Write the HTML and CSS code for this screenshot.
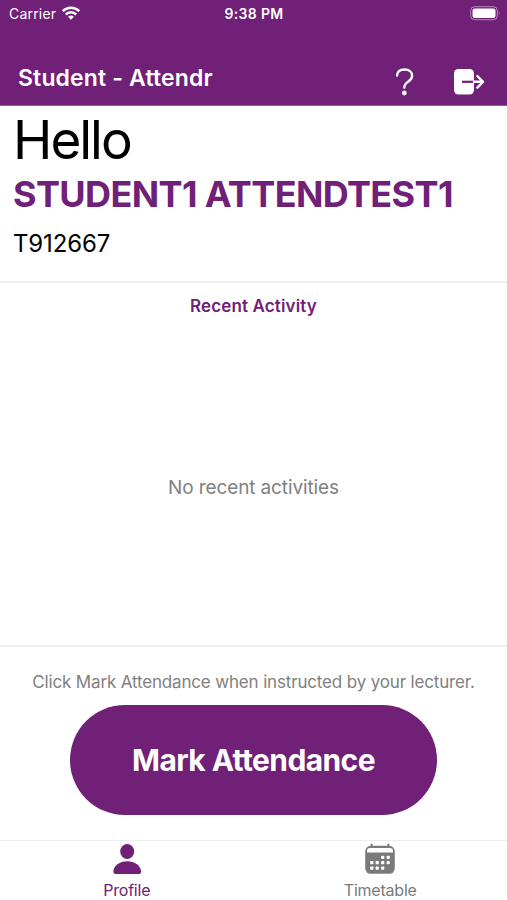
FILE: index.html
```html
<!DOCTYPE html>
<html lang="en">
<head>
    <meta charset="utf-8">
    <title>Student - Attendr</title>
    <link rel="stylesheet" href="styles.css">
</head>
<body>
    <header>
        <div class="status-bar">
            <div class="carrier">
                <span>Carrier</span>
                <svg width="18" height="14" viewBox="0 0 18 14" fill="none" stroke="#fff" stroke-width="2.5">
                    <path d="M0.8 5.2C5.4 0.6 12.6 0.6 17.2 5.2"/>
                    <path d="M3.8 8.5C6.8 5.6 11.2 5.6 14.2 8.5"/>
                    <path d="M6.1 10.8Q9 8.4 11.9 10.8L9 13.8Z" fill="#fff" stroke="none"/>
                </svg>
            </div>
            <div class="clock">9:38 PM</div>
            <svg class="battery" width="31" height="15" viewBox="0 0 31 15">
                <rect x="0.7" y="0.7" width="26.6" height="13" rx="4" fill="none" stroke="#fff" stroke-opacity=".45"/>
                <rect x="2.5" y="2.5" width="23" height="9.4" rx="2.2" fill="#fff"/>
                <path d="M28.8 5.2Q30.6 7.2 28.8 9.2Z" fill="#fff" fill-opacity=".5"/>
            </svg>
        </div>
        <div class="nav-bar">
            <h1>Student - Attendr</h1>
            <div class="nav-icons">
                <svg width="20" height="28" viewBox="0 0 20 28" fill="none">
                    <path d="M2 7.6C2.3 3.7 5.3 1.5 9.5 1.5C14 1.5 17.1 4 17.1 7.7C17.1 10.5 15.7 12 13.1 13.7C10.4 15.4 9.3 16.7 9.3 19.8" stroke="#fff" stroke-width="2.3" stroke-linecap="round"/>
                    <circle cx="9.3" cy="25" r="2.4" fill="#fff"/>
                </svg>
                <svg width="32" height="28" viewBox="0 0 32 28" fill="none">
                    <rect x="1" y="1" width="20" height="25.6" rx="4.5" fill="#fff"/>
                    <path d="M9 13.8H21" stroke="#702077" stroke-width="2.2"/>
                    <path d="M21 13.8H30M24.3 8L30.1 13.8L24.3 19.6" stroke="#fff" stroke-width="2.4" stroke-linecap="round" stroke-linejoin="round"/>
                </svg>
            </div>
        </div>
    </header>
    <div class="student">
        <div class="hello">Hello</div>
        <h2>STUDENT1 ATTENDTEST1</h2>
        <div class="student-id">T912667</div>
    </div>
    <div class="activity">
        <h3>Recent Activity</h3>
        <div class="empty"><span>No recent activities</span></div>
    </div>
    <div class="attendance">
        <p>Click Mark Attendance when instructed by your lecturer.</p>
        <button><span>Mark Attendance</span></button>
    </div>
    <nav class="tabs">
        <a class="tab active">
            <svg width="30" height="32" viewBox="0 0 30 32" fill="currentColor">
                <ellipse cx="15.2" cy="8.5" rx="7" ry="7.6"/>
                <path d="M1.4 28.4C1.4 23 7.7 18.2 15.2 18.2C22.7 18.2 29 23 29 28.4Q29 31 26.2 31H4.2Q1.4 31 1.4 28.4Z"/>
            </svg>
            <span class="profile">Profile</span>
        </a>
        <a class="tab">
            <svg width="32" height="32" viewBox="0 0 32 32">
                <path d="M7.6 1.5V5M24.4 1.5V5" stroke="currentColor" stroke-width="2" stroke-linecap="round"/>
                <rect x="1.2" y="2.8" width="29.6" height="28" rx="5.5" fill="currentColor"/>
                <path d="M3 9.4V7.8Q3 4.9 6 4.9H26Q29 4.9 29 7.8V9.4Z" fill="#fff"/>
                <g fill="#fff">
                    <rect x="17.1" y="12.8" width="3.2" height="3.2" rx=".8"/>
                    <rect x="22.6" y="12.8" width="3.2" height="3.2" rx=".8"/>
                    <rect x="6.2" y="18.1" width="3.2" height="3.2" rx=".8"/>
                    <rect x="11.6" y="18.1" width="3.2" height="3.2" rx=".8"/>
                    <rect x="17.1" y="18.1" width="3.2" height="3.2" rx=".8"/>
                    <rect x="22.6" y="18.1" width="3.2" height="3.2" rx=".8"/>
                    <rect x="6.2" y="23.5" width="3.2" height="3.2" rx=".8"/>
                    <rect x="11.6" y="23.5" width="3.2" height="3.2" rx=".8"/>
                    <rect x="17.1" y="23.5" width="3.2" height="3.2" rx=".8"/>
                </g>
            </svg>
            <span class="timetable">Timetable</span>
        </a>
    </nav>
</body>
</html>
```
FILE: styles.css
```css
* {
    box-sizing: border-box;
}
body {
    font-family: Inter, "Liberation Sans", sans-serif;
    margin: 0;
    height: 900px;
    display: flex;
    flex-direction: column;
    background-color: #fff;
    color: #000;
}
h1, h2, h3, p {
    margin: 0;
}
svg {
    display: block;
    flex: none;
}
header {
    height: 106px;
    background-color: #702077;
    border-bottom: 1px solid #965a9f;
    color: #fff;
}
.status-bar {
    height: 28px;
    padding: 0 6px 2px 9px;
    display: grid;
    grid-template-columns: 1fr auto 1fr;
    align-items: center;
    font-size: 14px;
}
.carrier {
    display: flex;
    align-items: center;
    gap: 6px;
    letter-spacing: 0.2px;
}
.carrier svg {
    margin-top: -1px;
}
.clock {
    font-weight: 600;
    letter-spacing: 0.3px;
    margin-right: 2px;
}
.battery {
    justify-self: end;
    margin-top: 1px;
}
.nav-bar {
    height: 77px;
    padding: 25px 22px 0 18px;
    display: flex;
    justify-content: space-between;
}
.nav-bar h1 {
    font-size: 23px;
    line-height: 50px;
    font-weight: 600;
    letter-spacing: 0.15px;
}
.nav-icons {
    display: flex;
    gap: 38px;
    padding-top: 15px;
}
.student {
    height: 177px;
    padding: 2px 13px 0;
    border-bottom: 2px solid #ededed;
}
.hello {
    font-size: 53px;
    line-height: 64px;
    letter-spacing: -2px;
}
.student h2 {
    font-size: 36px;
    line-height: 44px;
    font-weight: 700;
    letter-spacing: -0.62px;
    color: #702077;
    white-space: nowrap;
}
.student-id {
    font-size: 24px;
    line-height: 30px;
    letter-spacing: -0.15px;
    padding-top: 13px;
}
.activity {
    height: 364px;
    padding-top: 13px;
    display: flex;
    flex-direction: column;
    text-align: center;
    border-bottom: 2px solid #ededed;
}
.activity h3 {
    font-size: 17px;
    line-height: 20px;
    font-weight: 600;
    letter-spacing: 0.13px;
    color: #702077;
}
.empty {
    flex: 1;
    display: flex;
    align-items: center;
    justify-content: center;
    font-size: 19px;
    letter-spacing: -0.12px;
    color: #808080;
    padding-top: 14px;
}
.attendance {
    height: 193px;
    padding-top: 24px;
    display: flex;
    flex-direction: column;
    align-items: center;
}
.attendance p {
    font-size: 17px;
    line-height: 22px;
    letter-spacing: -0.16px;
    color: #808080;
    white-space: nowrap;
}
button {
    width: 367px;
    height: 110px;
    margin-top: 12px;
    padding: 0;
    border: 0;
    border-radius: 55px;
    background-color: #702077;
    color: #fff;
    font-family: inherit;
    font-size: 30px;
    font-weight: 700;
    letter-spacing: -0.6px;
}
.tabs {
    height: 60px;
    border-top: 1px solid #ececec;
    display: flex;
}
.tab {
    flex: 1;
    display: flex;
    flex-direction: column;
    align-items: center;
    padding-top: 2px;
    font-size: 16px;
    line-height: 20px;
    letter-spacing: -0.22px;
    color: #7a7a7a;
}
.tab span {
    margin-top: 5px;
}
.active {
    color: #702077;
}
```
